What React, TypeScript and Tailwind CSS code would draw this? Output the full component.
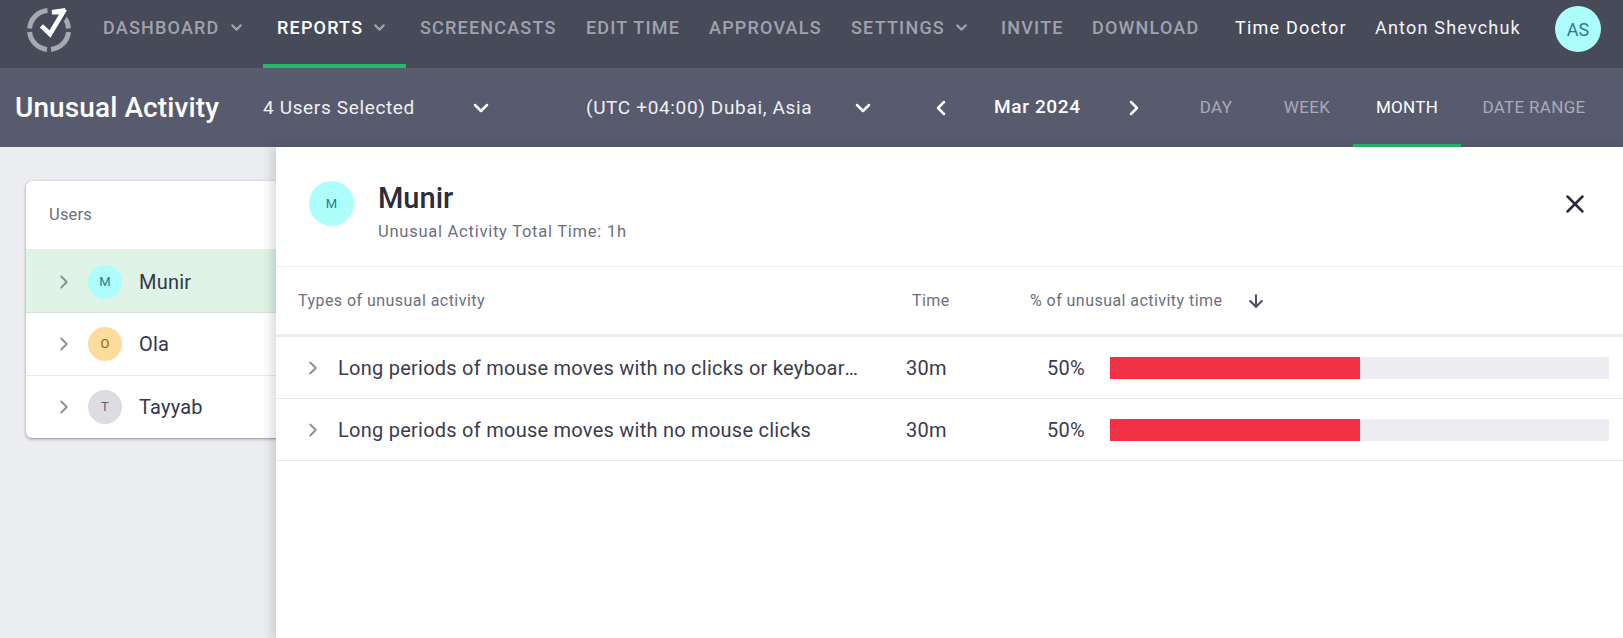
import { ArrowDown, ChevronDown, ChevronLeft, ChevronRight, X } from "lucide-react";

const navItems = [
  { label: "DASHBOARD", caret: true, className: "w-[174px]" },
  { label: "REPORTS", caret: true, active: true, className: "w-[143px]" },
  { label: "SCREENCASTS", className: "w-[166px]" },
  { label: "EDIT TIME", className: "w-[123px]" },
  { label: "APPROVALS", className: "w-[142px]" },
  { label: "SETTINGS", caret: true, className: "w-[150px]" },
  { label: "INVITE", className: "w-[91px]" },
  { label: "DOWNLOAD", className: "w-[144px]" },
];

const users = [
  { name: "Munir", initial: "M", avatar: "bg-[#adfdfd] text-[#1f7f8c]", row: "h-[64px] pt-[3px] bg-[#dff3e6] border-b border-[#d5e4da]" },
  { name: "Ola", initial: "O", avatar: "bg-[#fcdb9c] text-[#8a6414]", row: "h-[63px] border-b border-[#e8e9ed]" },
  { name: "Tayyab", initial: "T", avatar: "bg-[#dcdde1] text-[#5c5f70]", row: "h-[62px]" },
];

const activities = [
  { title: "Long periods of mouse moves with no clicks or keyboard activity", time: "30m", pct: 50 },
  { title: "Long periods of mouse moves with no mouse clicks", time: "30m", pct: 50 },
];

function Logo() {
  return (
    <svg width="48" height="48" viewBox="0 0 48 48" fill="none" className="mb-[8px] shrink-0">
      <g stroke="#a6a8b4" strokeWidth="5">
        <path d="M4.6 22.5 A19.5 19.5 0 0 1 22.5 4.6" />
        <path d="M43.5 26 A19.5 19.5 0 0 1 26 43.4" />
        <path d="M22 43.4 A19.5 19.5 0 0 1 4.6 26" />
        <path d="M38 10 A19.5 19.5 0 0 1 43.4 22.5" />
      </g>
      <path d="M16.4 19.9 L25 28.5 L38.8 6" stroke="#474a59" strokeWidth="10" />
      <path d="M16.4 19.9 L25 28 L38 6.2 L27 6.2 L40.5 4.3" stroke="#ffffff" strokeWidth="4.6" />
    </svg>
  );
}

export default function App() {
  return (
    <div className="relative h-[638px] w-[1623px] overflow-hidden bg-[#ecedf1] font-['Roboto',sans-serif]">
      <header className="flex h-[68px] items-center bg-[#474a59] pl-[25px]">
        <Logo />
        <nav className="ml-[16px] flex h-full">
          {navItems.map((item) => (
            <div
              key={item.label}
              className={`flex h-full items-center border-b-[4px] pb-[10px] pl-[14px] text-[18px] font-medium tracking-[1.2px] ${item.className} ${
                item.active ? "border-[#25b869] text-white" : "border-transparent text-[#a0a2ae]"
              }`}
            >
              <span className="whitespace-nowrap">{item.label}</span>
              {item.caret && <ChevronDown className="ml-[8px] h-[17px] w-[17px] text-[#a0a2ae]" strokeWidth={3} />}
            </div>
          ))}
        </nav>
        <span className="mb-[13px] ml-[13px] w-[140px] text-[18px] tracking-[1.2px] text-white">Time Doctor</span>
        <span className="mb-[13px] w-[180px] text-[18px] tracking-[1.2px] text-[#f4f4f6]">Anton Shevchuk</span>
        <div className="mb-[10px] flex h-[46px] w-[46px] items-center justify-center rounded-full bg-[#adfdfd] text-[18px] text-[#1f7f8c]">
          AS
        </div>
      </header>

      <div className="flex h-[79px] items-center bg-[#585b6e] pl-[15px] text-white">
        <h1 className="w-[248px] text-[28px] font-medium leading-none tracking-[0.1px]">Unusual Activity</h1>
        <span className="mt-[2px] w-[206px] text-[19px] tracking-[0.65px] text-[#f0f0f4]">4 Users Selected</span>
        <ChevronDown className="h-[24px] w-[24px]" strokeWidth={2.5} />
        <span className="ml-[93px] mt-[2px] w-[265px] text-[19px] tracking-[0.65px] text-[#f0f0f4]">(UTC +04:00) Dubai, Asia</span>
        <ChevronDown className="h-[24px] w-[24px]" strokeWidth={2.5} />
        <ChevronLeft className="ml-[54px] h-[24px] w-[24px]" strokeWidth={2.5} />
        <span className="ml-[41px] w-[128px] text-[19px] font-medium tracking-[0.65px]">Mar 2024</span>
        <ChevronRight className="h-[24px] w-[24px]" strokeWidth={2.5} />
        <div className="ml-[25px] flex h-full text-[17px] tracking-[0.3px]">
          <div className="flex w-[90px] items-center justify-center border-y-[3px] border-transparent text-[#a9abb7]">DAY</div>
          <div className="flex w-[92px] items-center justify-center border-y-[3px] border-transparent text-[#a9abb7]">WEEK</div>
          <div className="flex w-[108px] items-center justify-center border-y-[3px] border-t-transparent border-b-[#25b869] text-white">MONTH</div>
          <div className="flex w-[146px] items-center justify-center border-y-[3px] border-transparent text-[#a9abb7]">DATE RANGE</div>
        </div>
      </div>

      <div className="px-[26px] pt-[34px]">
        <div className="w-[300px] overflow-hidden rounded-[6px] bg-white shadow-[0_1px_3px_rgba(40,42,55,0.5)]">
          <div className="flex h-[68px] items-center pl-[23px] text-[16.5px] tracking-[0.2px] text-[#6c6f7f]">Users</div>
          {users.map((user) => (
            <div key={user.name} className={`flex items-center pl-[27px] ${user.row}`}>
              <ChevronRight className="h-[22px] w-[22px] text-[#8b8d99]" strokeWidth={2} />
              <div className={`ml-[13px] flex h-[34px] w-[34px] items-center justify-center rounded-full text-[13px] ${user.avatar}`}>
                {user.initial}
              </div>
              <span className="ml-[17px] text-[20px] tracking-[0.2px] text-[#34364a]">{user.name}</span>
            </div>
          ))}
        </div>
      </div>

      <aside className="absolute bottom-0 left-[276px] right-0 top-[147px] bg-white shadow-[-4px_0_10px_rgba(40,42,55,0.18)]">
        <div className="flex h-[120px] items-start border-b border-[#eceded] pl-[33px]">
          <div className="mt-[34px] flex h-[45px] w-[45px] items-center justify-center rounded-full bg-[#adfdfd] text-[13px] text-[#1f7f8c]">M</div>
          <div className="ml-[24px] mt-[34px]">
            <div className="text-[29px] font-medium leading-[34px] text-[#2b2d3a]">Munir</div>
            <div className="mt-[5px] text-[16.5px] tracking-[0.75px] text-[#6c6f7f]">Unusual Activity Total Time: 1h</div>
          </div>
          <X className="ml-auto mr-[33px] mt-[42px] h-[30px] w-[30px] text-[#2b2d3a]" strokeWidth={2} />
        </div>

        <div className="flex h-[70px] items-center border-b-[3px] border-[#ecedf1] pl-[22px] text-[16px] tracking-[0.45px] text-[#6c6f7f]">
          <span className="w-[614px]">Types of unusual activity</span>
          <span className="w-[118px]">Time</span>
          <span className="w-[216px]">% of unusual activity time</span>
          <ArrowDown className="h-[20px] w-[20px] text-[#4d5064]" strokeWidth={2.5} />
        </div>

        {activities.map((row) => (
          <div key={row.title} className="flex h-[62px] items-center border-b border-[#e8e9ed] pl-[26px] text-[20px] tracking-[0.25px] text-[#3a3c4c]">
            <ChevronRight className="h-[22px] w-[22px] shrink-0 text-[#8b8d99]" strokeWidth={2} />
            <span className="ml-[14px] w-[520px] truncate">{row.title}</span>
            <span className="ml-[48px] w-[80px]">{row.time}</span>
            <span className="ml-[61px] w-[63px]">{row.pct}%</span>
            <div className="h-[22px] w-[499px] bg-[#ecedf1]">
              <div className="h-full bg-[#f22f46]" style={{ width: `${row.pct}%` }} />
            </div>
          </div>
        ))}
      </aside>
    </div>
  );
}
